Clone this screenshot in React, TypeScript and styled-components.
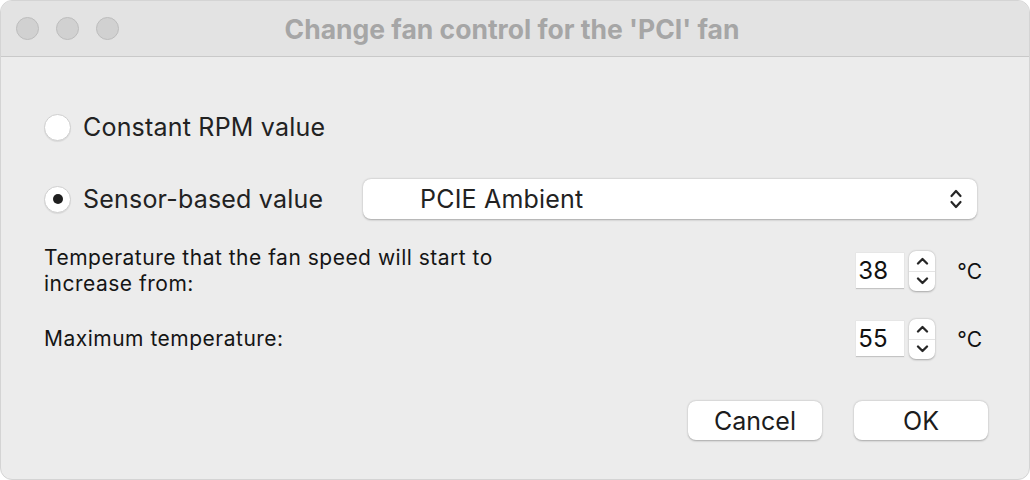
import React from "react";
import styled, { createGlobalStyle } from "styled-components";

const GlobalStyle = createGlobalStyle`
  html, body {
    margin: 0;
    padding: 0;
    background: #ffffff;
  }
  body {
    font-family: Inter, "Liberation Sans", sans-serif;
    -webkit-font-smoothing: antialiased;
  }
`;

const Window = styled.div`
  width: 1030px;
  height: 480px;
  box-sizing: border-box;
  display: flex;
  flex-direction: column;
  background: #ececec;
  border-radius: 12px;
  overflow: hidden;
  border: 1px solid #d4d4d4;
`;

const TitleBar = styled.div`
  height: 56px;
  flex-shrink: 0;
  display: flex;
  align-items: center;
  background: #e3e3e3;
  border-bottom: 1px solid #c9c9c9;
  box-sizing: border-box;
`;

const Lights = styled.div`
  display: flex;
  gap: 17px;
  padding-left: 15px;
`;

const Light = styled.span`
  width: 23px;
  height: 23px;
  border-radius: 50%;
  background: #d1d1d1;
  border: 1px solid #bdbdbd;
  box-sizing: border-box;
`;

const Title = styled.div`
  flex: 1;
  text-align: center;
  margin-left: -124px;
  font-size: 26.5px;
  font-weight: 700;
  color: #a6a6a6;
`;

const Body = styled.div`
  flex: 1;
  display: flex;
  flex-direction: column;
  padding: 50px 41px 0 43px;
`;

const Row = styled.div<{ $gap: number }>`
  display: flex;
  align-items: center;
  margin-top: ${(p) => p.$gap}px;
`;

const RadioOption = styled.label<{ $width?: number }>`
  display: flex;
  align-items: center;
  gap: 12px;
  height: 40px;
  width: ${(p) => (p.$width ? `${p.$width}px` : "auto")};
  flex-shrink: 0;
  font-size: 25px;
  letter-spacing: 0.2px;
  color: #222;
`;

const RadioCircle = styled.span<{ $on: boolean }>`
  width: 27px;
  height: 27px;
  border-radius: 50%;
  background: #fff;
  box-sizing: border-box;
  border: 1px solid #cfcfcf;
  box-shadow: 0 1px 1px rgba(0, 0, 0, 0.08);
  display: flex;
  align-items: center;
  justify-content: center;
  &::after {
    content: "";
    display: ${(p) => (p.$on ? "block" : "none")};
    width: 10px;
    height: 10px;
    border-radius: 50%;
    background: #1f1f1f;
  }
`;

const Select = styled.div`
  flex: 1;
  height: 40px;
  display: flex;
  align-items: center;
  justify-content: space-between;
  padding: 0 14px 0 57px;
  background: #fff;
  border-radius: 8px;
  box-shadow: 0 0.5px 2px rgba(0, 0, 0, 0.3);
  font-size: 25px;
  letter-spacing: 0.2px;
  color: #222;
  margin-right: 11px;
`;

const TempRow = styled.div<{ $gap: number }>`
  display: flex;
  align-items: center;
  justify-content: space-between;
  margin-top: ${(p) => p.$gap}px;
`;

const TempLabel = styled.div`
  font-size: 21px;
  line-height: 26px;
  letter-spacing: 0.5px;
  color: #151515;
  width: 490px;
`;

const FieldGroup = styled.div`
  display: flex;
  align-items: center;
  margin-right: 6px;
`;

const NumField = styled.div`
  width: 48px;
  height: 36px;
  box-sizing: border-box;
  background: #fff;
  border-bottom: 1px solid #c4c4c4;
  box-shadow: 0 0 0 0.5px #e0e0e0;
  font-size: 24px;
  line-height: 36px;
  padding-left: 2px;
  color: #111;
`;

const Stepper = styled.div`
  width: 26px;
  height: 40px;
  margin-left: 5px;
  background: #fff;
  border-radius: 7px;
  box-shadow: 0 0.5px 2px rgba(0, 0, 0, 0.3);
  display: flex;
  flex-direction: column;
  overflow: hidden;
`;

const StepHalf = styled.div<{ $top?: boolean }>`
  flex: 1;
  display: flex;
  align-items: center;
  justify-content: center;
  border-bottom: ${(p) => (p.$top ? "1px solid #e4e4e4" : "none")};
`;

const Unit = styled.span`
  margin-left: 22px;
  font-size: 21px;
  color: #111;
`;

const Footer = styled.div`
  display: flex;
  justify-content: flex-end;
  gap: 32px;
  margin-top: 42px;
`;

const Button = styled.button`
  width: 134px;
  height: 39px;
  border: none;
  border-radius: 8px;
  background: #fff;
  box-shadow: 0 0.5px 2px rgba(0, 0, 0, 0.3);
  font-family: inherit;
  font-size: 25px;
  color: #1c1c1c;
  padding: 0;
`;

const Chevron = ({ up }: { up: boolean }) => (
  <svg width="13" height="8" viewBox="0 0 13 8">
    <path
      d={up ? "M2 6.5 L6.5 2 L11 6.5" : "M2 1.5 L6.5 6 L11 1.5"}
      fill="none"
      stroke="#262626"
      strokeWidth="2.3"
      strokeLinecap="round"
      strokeLinejoin="round"
    />
  </svg>
);

const UpDown = () => (
  <svg width="14" height="22" viewBox="0 0 14 22">
    <path
      d="M2.5 8 L7 3 L11.5 8 M2.5 14 L7 19 L11.5 14"
      fill="none"
      stroke="#262626"
      strokeWidth="2.2"
      strokeLinecap="round"
      strokeLinejoin="round"
    />
  </svg>
);

const NumberInput = ({ value }: { value: number }) => (
  <FieldGroup>
    <NumField>{value}</NumField>
    <Stepper>
      <StepHalf $top>
        <Chevron up />
      </StepHalf>
      <StepHalf>
        <Chevron up={false} />
      </StepHalf>
    </Stepper>
    <Unit>°C</Unit>
  </FieldGroup>
);

export default function App() {
  return (
    <>
      <GlobalStyle />
      <Window>
        <TitleBar>
          <Lights>
            <Light />
            <Light />
            <Light />
          </Lights>
          <Title>Change fan control for the 'PCI' fan</Title>
        </TitleBar>
        <Body>
          <Row $gap={0}>
            <RadioOption>
              <RadioCircle $on={false} />
              Constant RPM value
            </RadioOption>
          </Row>
          <Row $gap={32}>
            <RadioOption $width={319}>
              <RadioCircle $on />
              Sensor-based value
            </RadioOption>
            <Select>
              <span>PCIE Ambient</span>
              <UpDown />
            </Select>
          </Row>
          <TempRow $gap={26}>
            <TempLabel>
              Temperature that the fan speed will start to increase from:
            </TempLabel>
            <NumberInput value={38} />
          </TempRow>
          <TempRow $gap={22}>
            <TempLabel>Maximum temperature:</TempLabel>
            <NumberInput value={55} />
          </TempRow>
          <Footer>
            <Button>Cancel</Button>
            <Button>OK</Button>
          </Footer>
        </Body>
      </Window>
    </>
  );
}
